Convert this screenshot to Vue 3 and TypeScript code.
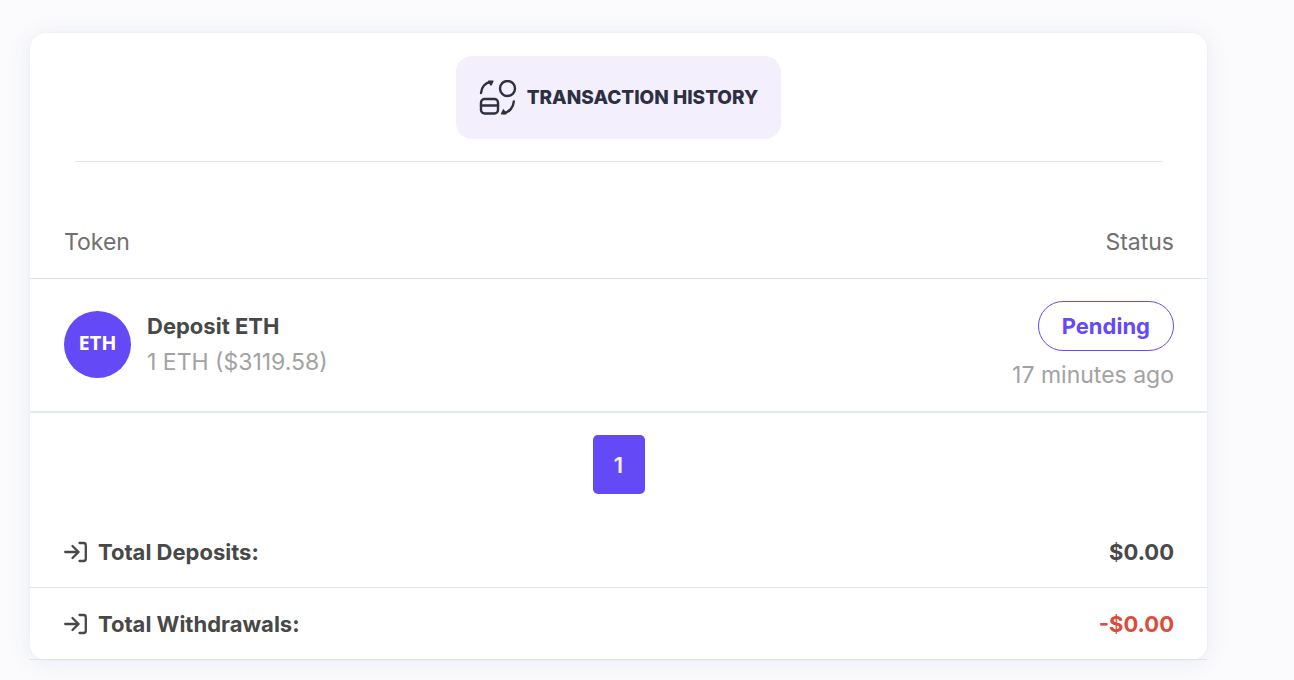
<script setup lang="ts">
interface Transaction {
  id: number
  token: string
  title: string
  detail: string
  status: string
  time: string
}

interface Total {
  label: string
  amount: string
  negative: boolean
}

const transactions: Transaction[] = [
  {
    id: 1,
    token: 'ETH',
    title: 'Deposit ETH',
    detail: '1 ETH ($3119.58)',
    status: 'Pending',
    time: '17 minutes ago',
  },
]

const totals: Total[] = [
  { label: 'Total Deposits:', amount: '$0.00', negative: false },
  { label: 'Total Withdrawals:', amount: '-$0.00', negative: true },
]
</script>

<template>
  <main class="page">
    <section class="card">
      <header class="card-head">
        <button class="history" type="button">
          <svg class="history-icon" viewBox="0 0 38 36" fill="none" stroke="currentColor" stroke-width="2.4" stroke-linecap="round" stroke-linejoin="round" aria-hidden="true">
            <path d="M2 13C2.4 7 6.2 2.6 11.600 2" />
            <path d="M9.500 1.200H14L12 5.200Z" fill="currentColor" stroke-width="1.200" />
            <circle cx="28.500" cy="8.500" r="7.500" />
            <rect x="2" y="19" width="17" height="14.500" rx="3.600" />
            <path d="M2 25.500H19" />
            <path d="M34.800 21.500C34.400 27.500 30.400 32 25 33" />
            <path d="M27 33.800H22.500L24.400 29.800Z" fill="currentColor" stroke-width="1.200" />
          </svg>
          <span>TRANSACTION HISTORY</span>
        </button>
      </header>

      <table class="transactions">
        <thead>
          <tr>
            <th scope="col">Token</th>
            <th scope="col" class="end">Status</th>
          </tr>
        </thead>
        <tbody>
          <tr v-for="item in transactions" :key="item.id">
            <td>
              <div class="asset">
                <span class="coin">{{ item.token }}</span>
                <div>
                  <div class="title">{{ item.title }}</div>
                  <div class="muted">{{ item.detail }}</div>
                </div>
              </div>
            </td>
            <td class="end">
              <span class="badge">{{ item.status }}</span>
              <div class="muted time">{{ item.time }}</div>
            </td>
          </tr>
        </tbody>
      </table>

      <nav class="pager" aria-label="Pages">
        <button class="page-number" type="button" aria-current="page">1</button>
      </nav>

      <table class="totals">
        <tbody>
          <tr v-for="total in totals" :key="total.label">
            <th scope="row">
              <div class="total-label">
                <svg class="enter-icon" viewBox="0 0 24 24" fill="none" stroke="currentColor" stroke-width="2.300" stroke-linecap="round" stroke-linejoin="round" aria-hidden="true">
                  <path d="M1.200 12H14.500M8.500 6L14.500 12L8.500 18" />
                  <path d="M15.500 3H19.500Q21.800 3 21.800 5.300V18.700Q21.800 21 19.500 21H15.500" />
                </svg>
                <span>{{ total.label }}</span>
              </div>
            </th>
            <td class="end" :class="{ negative: total.negative }">{{ total.amount }}</td>
          </tr>
        </tbody>
      </table>
    </section>
  </main>
</template>

<style>
body {
  background: #fbfbfd;
}
</style>

<style scoped>
.page {
  padding: 33px 87px 20px 30px;
  font-family: Inter, "Liberation Sans", sans-serif;
  font-size: 23px;
  line-height: 36px;
  color: #484848;
}

.card {
  background: linear-gradient(#fff, #fff) padding-box;
  border-radius: 16px;
  box-shadow: 0 0 3px rgba(60, 70, 110, 0.05), 0 2px 24px rgba(60, 80, 140, 0.09);
}

.card-head {
  display: flex;
  justify-content: center;
  margin: 0 45px;
  padding: 23px 0 22px;
  border-bottom: 1px solid #e4e4e4;
}

.history {
  display: flex;
  align-items: center;
  gap: 10px;
  height: 83px;
  padding: 0 23px;
  border: 0;
  border-radius: 16px;
  background: #f3effd;
  color: #2e2f42;
  font: 800 19px/28px Inter, "Liberation Sans", sans-serif;
  cursor: pointer;
}

.history-icon {
  width: 38px;
  height: 36px;
}

table {
  width: 100%;
  border-collapse: separate;
  border-spacing: 0;
}

th,
td {
  padding: 0 34px;
  border-bottom: 1px solid #e1e4e4;
  text-align: left;
}

.end {
  padding-right: 33px;
  text-align: right;
}

.transactions {
  margin-top: 44px;
}

.transactions th {
  height: 72px;
  font-weight: 400;
  color: #707070;
}

.transactions td {
  padding-top: 22px;
  padding-bottom: 18px;
  border-bottom: 2px solid #e1edeb;
  vertical-align: top;
}

.asset {
  display: flex;
  align-items: center;
  gap: 16px;
  padding-top: 7px;
}

.coin {
  display: flex;
  align-items: center;
  justify-content: center;
  width: 67px;
  height: 67px;
  padding-bottom: 3px;
  box-sizing: border-box;
  border-radius: 50%;
  background: #6449f6;
  color: #fff;
  font: 700 20px/28px "Noto Sans", sans-serif;
}

.title,
.badge {
  font-size: 22px;
  font-weight: 700;
}

.muted {
  color: #a2a2a2;
}

.badge {
  display: inline-block;
  padding: 6px 23px;
  border: 1px solid #6449f6;
  border-radius: 25px;
  color: #6449f6;
}

.time {
  margin-top: 6px;
}

.pager {
  display: flex;
  justify-content: center;
  padding: 22px 0;
}

.page-number {
  width: 52px;
  height: 59px;
  padding: 0;
  border: 0;
  border-radius: 5px;
  background: #6449f6;
  color: #f1effc;
  font: 600 22px/36px Inter, "Liberation Sans", sans-serif;
  cursor: pointer;
}

.totals th,
.totals td {
  height: 71px;
  font-size: 22px;
  font-weight: 700;
}

.total-label {
  display: flex;
  align-items: center;
  gap: 10px;
}

.enter-icon {
  width: 24px;
  height: 24px;
}

.totals .negative {
  color: #dc4c3c;
}
</style>
